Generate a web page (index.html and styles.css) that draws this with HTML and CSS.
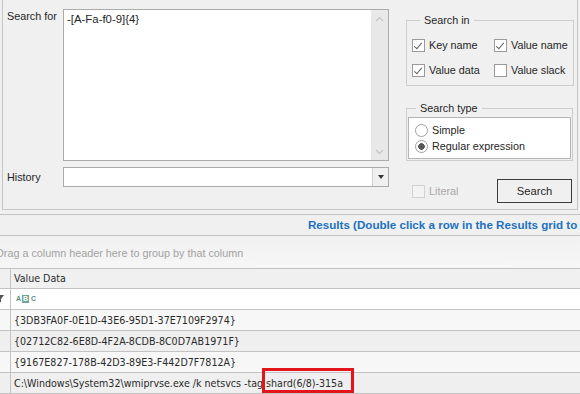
FILE: index.html
```html
<!DOCTYPE html>
<html lang="en">
<head>
    <meta charset="UTF-8">
    <title>Registry Search</title>
    <link rel="stylesheet" href="styles.css">
</head>
<body>
    <div class="search-panel">
        <div class="query">
            <div class="query-row">
                <label class="field-label">Search for</label>
                <div class="text-box">
                    <div class="text-content">-[A-Fa-f0-9]{4}</div>
                    <div class="v-scroll">
                        <svg width="9" height="6" viewBox="0 0 9 6"><path d="M1 5 L4.5 1.5 L8 5" fill="none" stroke="#c4c4c4" stroke-width="1.2"/></svg>
                        <svg width="9" height="6" viewBox="0 0 9 6"><path d="M1 1 L4.5 4.5 L8 1" fill="none" stroke="#c4c4c4" stroke-width="1.2"/></svg>
                    </div>
                </div>
            </div>
            <div class="query-row history-row">
                <label class="field-label">History</label>
                <div class="combo">
                    <div class="combo-input"></div>
                    <div class="combo-button"><span class="tri"></span></div>
                </div>
            </div>
        </div>

        <div class="options">
            <fieldset class="group">
                <legend>Search in</legend>
                <div class="check-grid">
                    <label class="check"><span class="box checked"></span>Key name</label>
                    <label class="check"><span class="box checked"></span>Value name</label>
                    <label class="check"><span class="box checked"></span>Value data</label>
                    <label class="check"><span class="box"></span>Value slack</label>
                </div>
            </fieldset>

            <fieldset class="group group-type">
                <legend>Search type</legend>
                <div class="radio-list">
                    <label class="radio"><span class="dot"></span>Simple</label>
                    <label class="radio"><span class="dot on"></span>Regular expression</label>
                </div>
            </fieldset>

            <div class="actions">
                <label class="check disabled"><span class="box"></span>Literal</label>
                <button class="btn">Search</button>
            </div>
        </div>
    </div>

    <div class="strip"></div>
    <div class="results-title">Results (Double click a row in the Results grid to view the key)</div>
    <div class="group-panel"><span>Drag a column header here to group by that column</span></div>

    <div class="grid">
        <div class="grid-row grid-header">
            <div class="indicator"></div>
            <div class="cell">Value Data</div>
        </div>
        <div class="grid-row filter-row">
            <div class="indicator">
                <svg width="4" height="8" viewBox="0 0 4 8"><path d="M-4 0 H4 L1 4 V7.5 L-1 6 V4 Z" fill="#555"/></svg>
            </div>
            <div class="cell">
                <span class="abc"><i>A</i><b>B</b><i>C</i></span>
            </div>
        </div>
        <div class="grid-row">
            <div class="indicator"></div>
            <div class="cell">{3DB3FA0F-0E1D-43E6-95D1-37E7109F2974}</div>
        </div>
        <div class="grid-row alt">
            <div class="indicator"></div>
            <div class="cell">{02712C82-6E8D-4F2A-8CDB-8C0D7AB1971F}</div>
        </div>
        <div class="grid-row">
            <div class="indicator"></div>
            <div class="cell">{9167E827-178B-42D3-89E3-F442D7F7812A}</div>
        </div>
        <div class="grid-row alt">
            <div class="indicator"></div>
            <div class="cell">C:\Windows\System32\wmiprvse.exe /k netsvcs -tag shard(6/8)-315a</div>
            <div class="highlight"></div>
        </div>
    </div>
</body>
</html>
```

FILE: styles.css
```css
* {
    margin: 0;
    padding: 0;
    box-sizing: border-box;
}

body {
    font-family: 'Liberation Sans', Arial, sans-serif;
    font-size: 10.8px;
    color: #262626;
    background: #f0f0f0;
    width: 580px;
    height: 394px;
    overflow: hidden;
}

/* Top search panel */
.search-panel {
    display: flex;
    gap: 17px;
    margin: 0 2px;
    height: 210px;
    padding: 9px 4px 0 4px;
    border: 1px solid #c6c6c6;
    border-top: none;
}

.query {
    width: 382px;
    display: flex;
    flex-direction: column;
    gap: 6px;
}

.query-row {
    display: flex;
}

.field-label {
    width: 56px;
    line-height: 15px;
}

.text-box {
    width: 326px;
    height: 152px;
    background: #fff;
    border: 1px solid #ababab;
    display: flex;
}

.text-content {
    flex: 1;
    padding: 2px 3px;
    line-height: 14px;
    font-size: 11.4px;
}

.v-scroll {
    width: 17px;
    background: #e8e8e8;
    display: flex;
    flex-direction: column;
    justify-content: space-between;
    align-items: center;
    padding: 6px 0 5px;
}

.history-row {
    align-items: center;
}

.combo {
    width: 326px;
    height: 20px;
    display: flex;
    background: #fff;
    border: 1px solid #ababab;
}

.combo-input {
    flex: 1;
}

.combo-button {
    width: 16px;
    background: #f0f0f0;
    border-left: 1px solid #d0d0d0;
    display: flex;
    align-items: center;
    justify-content: center;
}

.tri {
    width: 0;
    height: 0;
    border-left: 3.5px solid transparent;
    border-right: 3.5px solid transparent;
    border-top: 4px solid #333;
}

/* Options column */
.options {
    width: 167px;
    margin-top: 4px;
}

.group {
    border: 1px solid #cdcdcd;
    padding: 11px 5px 8px 5px;
}

.group legend {
    margin-left: 8px;
    padding: 0 4px;
    line-height: 14px;
}

.check-grid {
    display: grid;
    grid-template-columns: 82px 1fr;
    row-gap: 11px;
}

.check {
    display: flex;
    align-items: center;
    gap: 4px;
    height: 14px;
    white-space: nowrap;
}

.box {
    width: 13px;
    height: 13px;
    border: 1px solid #9a9a9a;
    background: #fff;
    position: relative;
}

.box.checked::after {
    content: '';
    position: absolute;
    left: 3px;
    top: 1px;
    width: 3px;
    height: 7px;
    border-right: 1px solid #606060;
    border-bottom: 1px solid #606060;
    transform: rotate(40deg);
}

.check.disabled {
    color: #a9a9a9;
}

.check.disabled .box {
    border-color: #d2d2d2;
    background: #f3f3f3;
}

.group-type {
    margin-top: 15px;
    padding: 2px 1px 1px 1px;
}

.radio-list {
    background: #fff;
    border: 1px solid #b4b4b4;
    padding: 5px 6px;
    display: flex;
    flex-direction: column;
    gap: 2px;
}

.radio {
    display: flex;
    align-items: center;
    gap: 4px;
    height: 14px;
}

.dot {
    width: 13px;
    height: 13px;
    border-radius: 50%;
    border: 1px solid #a0a0a0;
    background: #fff;
}

.dot.on {
    background: radial-gradient(circle, #555 0 3px, #fff 3.6px);
}

.actions {
    display: flex;
    justify-content: space-between;
    align-items: center;
    margin-top: 18px;
    padding-left: 6px;
}

.btn {
    width: 75px;
    height: 24px;
    margin-right: 1px;
    font: inherit;
    font-size: 11.2px;
    color: #262626;
    background: #f0f0f0;
    border: 1px solid #3c3c3c;
}

/* Results area */
.strip {
    height: 5px;
    border-bottom: 1px solid #c3c3c3;
}

.results-title {
    height: 21px;
    line-height: 20px;
    padding-left: 308px;
    white-space: nowrap;
    overflow: hidden;
    font-size: 11.6px;
    font-weight: bold;
    color: #1c72c0;
    border-bottom: 1px solid #c3c3c3;
}

.group-panel {
    height: 33px;
    padding-top: 3px;
    line-height: 28px;
    white-space: nowrap;
    overflow: hidden;
    color: #a2a2a2;
    background: linear-gradient(#f1f1f1, #f6f6f6);
    border-bottom: 1px solid #c3c3c3;
}

.group-panel span {
    margin-left: -4px;
}

/* Grid */
.grid {
    font-family: 'DejaVu Sans Condensed', 'Liberation Sans', sans-serif;
    font-size: 10.6px;
    color: #2a2a2a;
}

.grid-row {
    display: flex;
    height: 21px;
    background: #f7f7f7;
    border-bottom: 1px solid #c3c3c3;
    position: relative;
}

.grid-row.alt {
    background: #efefef;
}

.grid-header {
    height: 20px;
    background: #f0f0f0;
}

.filter-row {
    background: #fff;
}

.indicator {
    width: 11px;
    border-right: 1px solid #c3c3c3;
    overflow: hidden;
    display: flex;
    align-items: center;
}

.cell {
    flex: 1;
    padding-left: 3px;
    line-height: 20px;
    white-space: nowrap;
}

.grid-header .cell {
    line-height: 19px;
}

.abc {
    display: inline-flex;
    align-items: center;
    gap: 1px;
    margin-left: 2px;
    font-family: 'Liberation Sans', sans-serif;
    font-size: 7px;
    font-weight: bold;
    line-height: 8px;
    vertical-align: middle;
    position: relative;
    top: -1px;
}

.abc i {
    font-style: normal;
    color: #5e8d81;
    width: 4px;
}

.abc b {
    color: #fff;
    background: #6ea596;
    padding: 0 1px;
    margin: 0 1px;
}

/* Red annotation box over the matched text */
.highlight {
    position: absolute;
    left: 262px;
    top: -5px;
    width: 92px;
    height: 25px;
    border: 3px solid #e3141c;
}
```
